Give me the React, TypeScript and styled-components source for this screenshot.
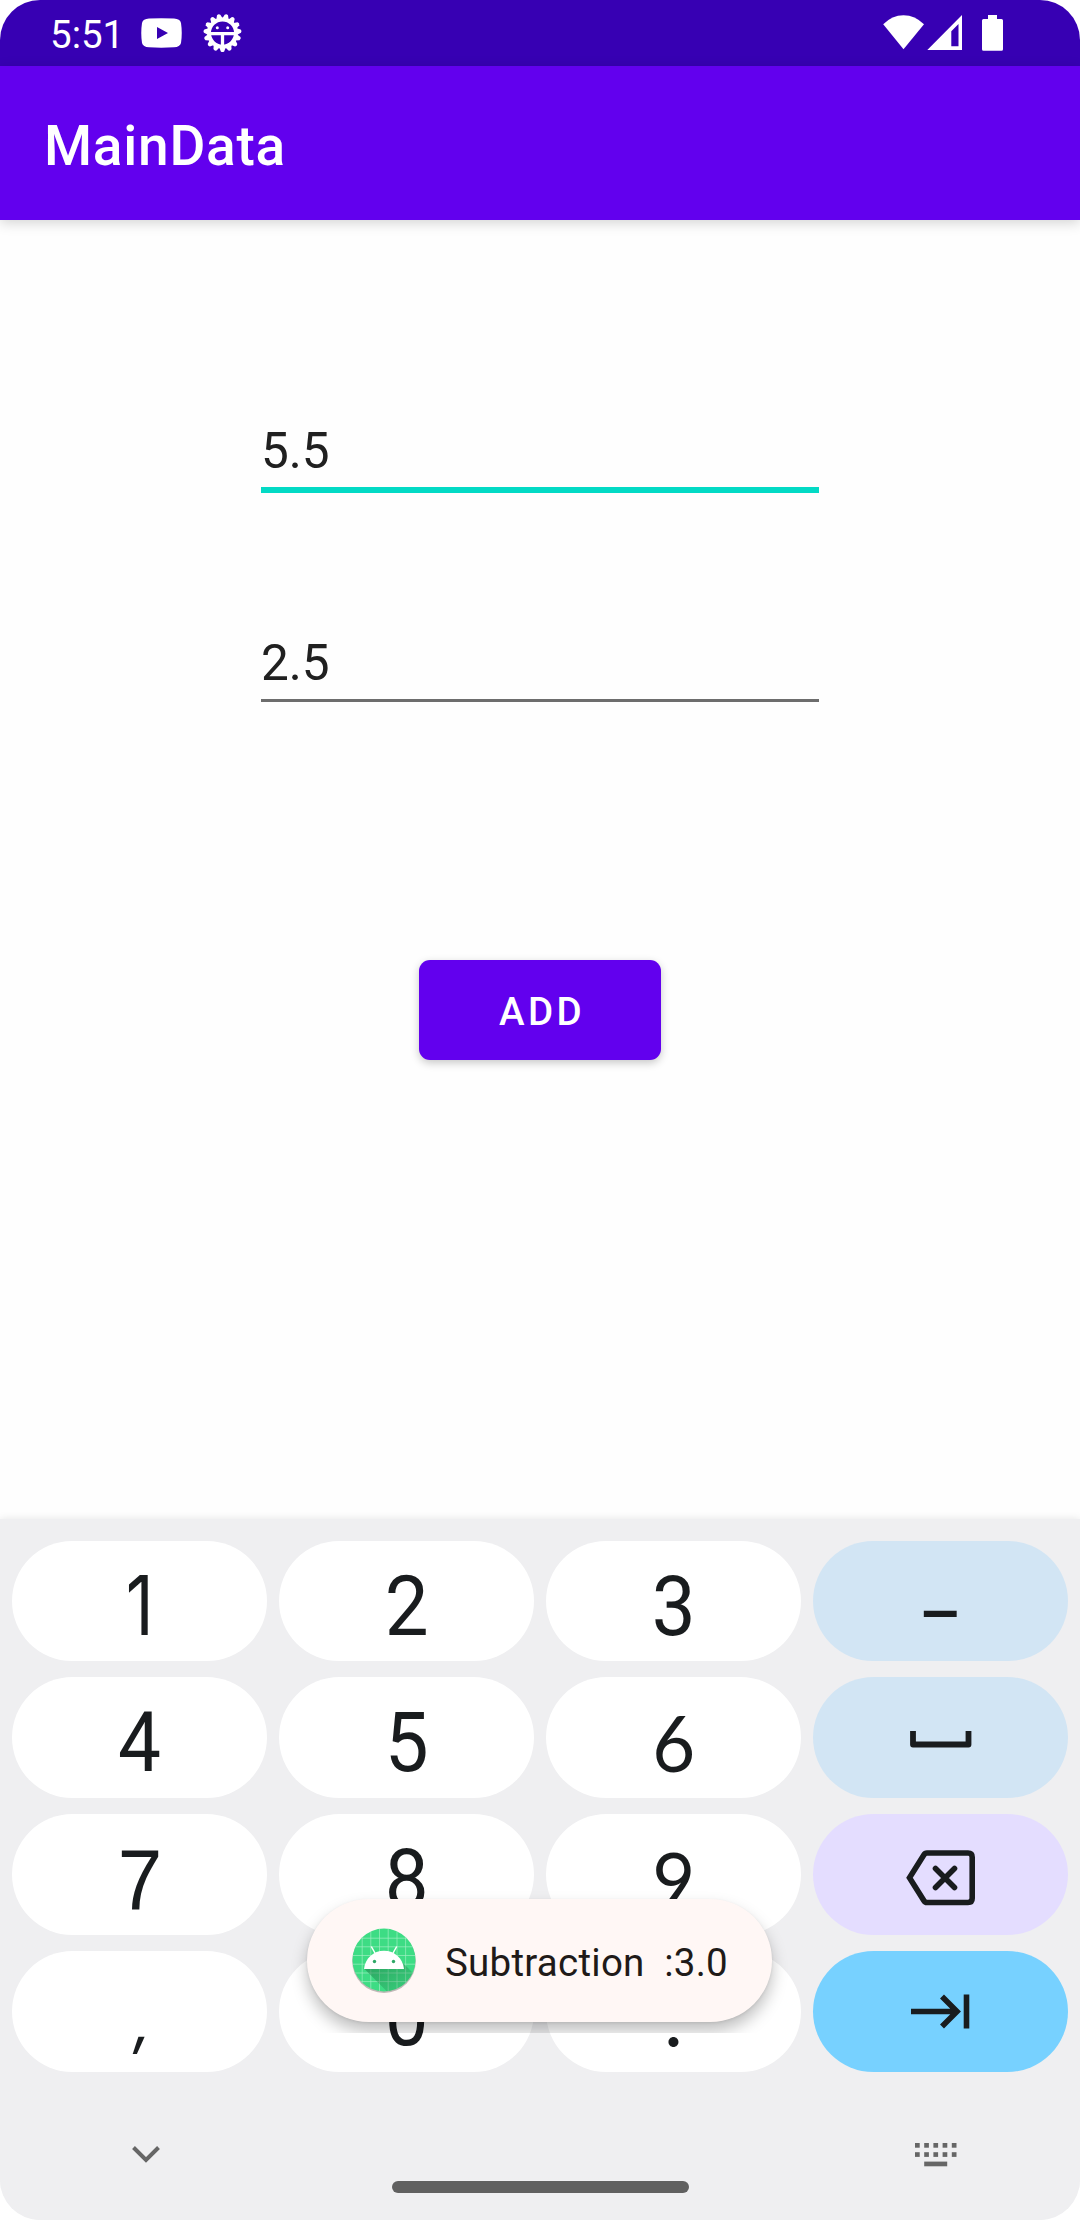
import React from "react";
import styled, { createGlobalStyle } from "styled-components";

const GlobalStyle = createGlobalStyle`
  body { margin: 0; background: #fff; }
  *, *::before, *::after { box-sizing: border-box; }
`;

const Screen = styled.div`
  position: relative;
  display: flex;
  flex-direction: column;
  width: 1080px;
  height: 2220px;
  overflow: hidden;
  border-radius: 40px;
  background: #fefefe;
  font-family: Roboto, "Liberation Sans", sans-serif;
`;

const StatusBar = styled.header`
  display: flex;
  align-items: center;
  justify-content: space-between;
  flex: none;
  height: 66px;
  padding: 0 77px 0 50px;
  background: #3700b3;
  color: #fff;
`;

const StatusGroup = styled.div<{ $gap: number }>`
  display: flex;
  align-items: center;
  gap: ${(p) => p.$gap}px;
`;

const Clock = styled.time`
  width: 70px;
  padding-top: 3px;
  font-size: 38.5px;
  line-height: 45px;
  white-space: nowrap;
`;

const AppBar = styled.div`
  position: relative;
  display: flex;
  align-items: center;
  flex: none;
  height: 154px;
  padding: 6px 44px 0;
  background: #6200ee;
  box-shadow: 0 3px 12px rgba(0, 0, 0, 0.17);
`;

const Title = styled.h1`
  margin: 0;
  color: #fff;
  font-size: 55px;
  font-weight: 500;
  line-height: 64px;
  letter-spacing: 0.75px;
`;

const Content = styled.main`
  display: flex;
  flex-direction: column;
  align-items: center;
  flex: 1;
  padding-top: 200px;
`;

const Field = styled.div<{ $focused?: boolean }>`
  display: flex;
  align-items: flex-end;
  width: 558px;
  height: ${(p) => (p.$focused ? 73 : 70)}px;
  margin-bottom: ${(p) => (p.$focused ? 139 : 258)}px;
  padding-bottom: 7px;
  border-bottom: ${(p) => (p.$focused ? "6px solid #03dac5" : "3px solid #6d6d6d")};
  color: #202020;
  font-size: 49.5px;
  line-height: 58px;
`;

const AddButton = styled.button`
  width: 242px;
  height: 100px;
  padding: 2px 0 0 4px;
  border: 0;
  border-radius: 11px;
  background: #6200ee;
  box-shadow: 0 3px 8px rgba(0, 0, 0, 0.22);
  color: #fff;
  font: 500 38.5px Roboto, sans-serif;
  letter-spacing: 3.44px;
`;

const Keyboard = styled.section`
  display: flex;
  flex-direction: column;
  flex: none;
  height: 701px;
  padding-top: 22px;
  background: #efeff1;
  box-shadow: 0 0 8px rgba(0, 0, 0, 0.1);
`;

const KeyGrid = styled.div`
  display: grid;
  grid-template-columns: repeat(4, 255px);
  grid-template-rows: 120px 121px 121px 121px;
  gap: 16px 12px;
  padding: 0 12px;
`;

const Key = styled.button<{ $fill?: string }>`
  display: flex;
  align-items: center;
  justify-content: center;
  padding: 0;
  border: 0;
  border-radius: 61px;
  background: ${(p) => p.$fill ?? "#fff"};
  color: #191c1e;
`;

const Glyph = styled.span<{ $size?: number; $font?: string; $stretch?: number; $top?: number; $slant?: number }>`
  padding-top: ${(p) => p.$top ?? 11}px;
  font-family: ${(p) => p.$font ?? "Roboto"}, sans-serif;
  font-size: ${(p) => p.$size ?? 84}px;
  line-height: 98px;
  transform: scaleX(${(p) => p.$stretch ?? 0.93}) skewX(${(p) => p.$slant ?? 0}deg);
  transform-origin: 50% 75%;
`;

const NavBar = styled.footer`
  display: grid;
  grid-template-columns: 1fr 297px 1fr;
  height: 148px;
  padding-top: 57px;
`;

const NavSlot = styled.div<{ $pad: string }>`
  display: flex;
  align-items: flex-start;
  padding: ${(p) => p.$pad};
`;

const HomePill = styled.div`
  height: 12px;
  margin-top: 52px;
  border-radius: 6px;
  background: #606060;
`;

const ToastWindow = styled.div`
  position: absolute;
  top: 1889px;
  left: 263px;
  padding: 10px 44px 11px;
  overflow: hidden;
`;

const Toast = styled.div`
  display: flex;
  align-items: center;
  width: 465px;
  height: 123px;
  padding-left: 45px;
  border-radius: 62px;
  background: #fff7f5;
  box-shadow: 0 9px 16px rgba(0, 0, 0, 0.25), 0 1px 3px rgba(0, 0, 0, 0.08);
`;

const ToastText = styled.span`
  padding: 3px 0 0 29px;
  color: #201a18;
  font-size: 38.5px;
  line-height: 45px;
  letter-spacing: 0.25px;
  white-space: pre;
`;

const YoutubeIcon = () => (
  <svg width="41" height="30" viewBox="0 0 41 30">
    <path
      fill="#fff"
      fillRule="evenodd"
      d="M8 .6Q20 -.2 33 .6Q39 .9 40 5Q41.5 15 40 25Q39 29 33 29.300Q20 30 8 29.300Q2 29 1 25Q-.5 15 1 5Q2 .9 8 .600ZM16 9V21L27 15Z"
    />
  </svg>
);

const GearIcon = () => (
  <svg width="40" height="40" viewBox="-19.500 -20 40 40" fill="none" stroke="#fff">
    {Array.from({ length: 15 }, (_, i) => (
      <path key={i} d="M-3.200 -14.500L-1.700 -18.400Q0 -19.800 1.700 -18.400L3.200 -14.500Z" fill="#fff" stroke="none" transform={`rotate(${i * 24 + 12})`} />
    ))}
    <circle r="13.500" strokeWidth="4" />
    <path d="M-13 .7H13M0 .7V14" strokeWidth="3.300" />
    <circle cx="-5.200" cy="-5.300" r="1.500" fill="#fff" stroke="none" />
    <circle cx="5.200" cy="-5.300" r="1.500" fill="#fff" stroke="none" />
  </svg>
);

const SystemIcons = () => (
  <svg width="120" height="38" viewBox="883 14 120 38" fill="#fff">
    <path d="M883.200 24.300Q892 15.200 903.500 15.200Q915 15.200 924 24.300L903.500 49.300Z" />
    <path fillRule="evenodd" d="M962 15V50H927.300ZM958.500 24L951.300 31.200V46.300H958.500Z" />
    <path d="M988 15H997V19H1001.500Q1003 19 1003 20.500V49.200Q1003 50.700 1001.500 50.700H983.500Q982 50.700 982 49.200V20.500Q982 19 983.500 19H988Z" />
  </svg>
);

const SpaceIcon = () => (
  <svg width="62" height="20" viewBox="0 -2 62 20">
    <path d="M3 1V14.500H58.500V1" fill="none" stroke="#191c1e" strokeWidth="5.800" strokeLinejoin="round" />
  </svg>
);

const BackspaceIcon = () => (
  <svg width="70" height="62" viewBox="0 -6 70 62" fill="none" stroke="#191c1e" strokeWidth="5.600">
    <path d="M21 3H62Q66.200 3 66.200 7.200V48.300Q66.200 52.500 62 52.500H21Q19 52.500 17.800 50.500L3.500 27.800L17.800 5Q19 3 21 3Z" />
    <path d="M29.500 18.500L48.500 37.500M48.500 18.500L29.500 37.500" strokeLinecap="round" />
  </svg>
);

const TabIcon = () => (
  <svg width="59" height="35" viewBox="0 0 59 35" fill="none" stroke="#191c1e" strokeWidth="5.600">
    <path d="M0 17.500H46M31 2.500L46 17.500L31 32.500M55.500 .5V34.500" />
  </svg>
);

const ChevronIcon = () => (
  <svg width="28" height="18" viewBox="0 0 28 18">
    <path d="M1.500 1.500L14 14L26.500 1.500" fill="none" stroke="#666" strokeWidth="4" />
  </svg>
);

const KeyboardIcon = () => (
  <svg width="42" height="24" viewBox="0 0 42 24" fill="#666">
    {[0, 9.2, 18.4, 27.6, 36.8].map((x) => (
      <React.Fragment key={x}>
        <rect x={x} y="0" width="4.700" height="4.700" />
        <rect x={x} y="9.200" width="4.700" height="4.700" />
      </React.Fragment>
    ))}
    <rect x="9.200" y="18.600" width="23" height="4.700" />
  </svg>
);

const AppIcon = () => (
  <svg width="64" height="66" viewBox="0 0 64 66">
    <defs>
      <clipPath id="disc">
        <circle cx="32" cy="32" r="31.500" />
      </clipPath>
      <linearGradient id="shade" x1="0" y1="0" x2="1" y2="1">
        <stop offset="0" stopColor="#1c7a45" stopOpacity=".6" />
        <stop offset="1" stopColor="#1c7a45" stopOpacity="0.1" />
      </linearGradient>
    </defs>
    <circle cx="32" cy="33.200" r="31.800" fill="#000" opacity=".25" />
    <g clipPath="url(#disc)">
      <rect width="64" height="64" fill="#3ddc84" />
      <path d="M10.200 0V64M18.800 0V64M27.500 0V64M36.200 0V64M45 0V64M53.600 0V64M0 10.200H64M0 18.800H64M0 27.500H64M0 36.200H64M0 45H64M0 53.600H64" stroke="#a5f0c5" strokeOpacity=".65" strokeWidth="1" />
      <path d="M12 40.500L36 64.500H64V48L50 34L51.500 40.500Z" fill="url(#shade)" />
    </g>
    <path d="M12 41C13 30.500 21.500 22.800 32 22.800S51 30.500 52 41Z" fill="#fff" />
    <path d="M23.500 26L19.300 18.500M40.500 26L44.700 18.500" stroke="#fff" strokeWidth="1.500" />
    <circle cx="22.500" cy="33.500" r="1.700" fill="#2fa866" />
    <circle cx="41.500" cy="33.500" r="1.700" fill="#2fa866" />
  </svg>
);

export default function App() {
  return (
    <>
      <GlobalStyle />
      <Screen>
        <StatusBar>
          <StatusGroup $gap={21}>
            <Clock>5:51</Clock>
            <YoutubeIcon />
            <GearIcon />
          </StatusGroup>
          <SystemIcons />
        </StatusBar>
        <AppBar>
          <Title>MainData</Title>
        </AppBar>
        <Content>
          <Field $focused>5.5</Field>
          <Field>2.5</Field>
          <AddButton>ADD</AddButton>
        </Content>
        <Keyboard>
          <KeyGrid>
            <Key><Glyph $font="Inter" $size={82} $stretch={0.84} $top={10}>1</Glyph></Key>
            <Key><Glyph>2</Glyph></Key>
            <Key><Glyph>3</Glyph></Key>
            <Key $fill="#d2e5f4"><Glyph $top={29} $stretch={0.8}>–</Glyph></Key>
            <Key><Glyph $stretch={0.91}>4</Glyph></Key>
            <Key><Glyph>5</Glyph></Key>
            <Key><Glyph $font="Lato" $size={78} $stretch={0.95} $top={9}>6</Glyph></Key>
            <Key $fill="#d2e5f4"><SpaceIcon /></Key>
            <Key><Glyph $font="'Liberation Sans'" $size={86} $stretch={0.93} $top={8}>7</Glyph></Key>
            <Key><Glyph>8</Glyph></Key>
            <Key><Glyph $font="Lato" $size={78} $stretch={0.95} $top={9}>9</Glyph></Key>
            <Key $fill="#e4ddff"><BackspaceIcon /></Key>
            <Key><Glyph $font="Inter" $size={62} $stretch={1} $top={18} $slant={-10}>,</Glyph></Key>
            <Key><Glyph>0</Glyph></Key>
            <Key><Glyph $font="Inter" $size={76} $stretch={1} $top={15}>.</Glyph></Key>
            <Key $fill="#77d1ff"><TabIcon /></Key>
          </KeyGrid>
          <NavBar>
            <NavSlot $pad="17px 0 0 132px"><ChevronIcon /></NavSlot>
            <HomePill />
            <NavSlot $pad="14px 0 0 226px"><KeyboardIcon /></NavSlot>
          </NavBar>
        </Keyboard>
        <ToastWindow>
          <Toast>
            <AppIcon />
            <ToastText>{"Subtraction  :3.0"}</ToastText>
          </Toast>
        </ToastWindow>
      </Screen>
    </>
  );
}
